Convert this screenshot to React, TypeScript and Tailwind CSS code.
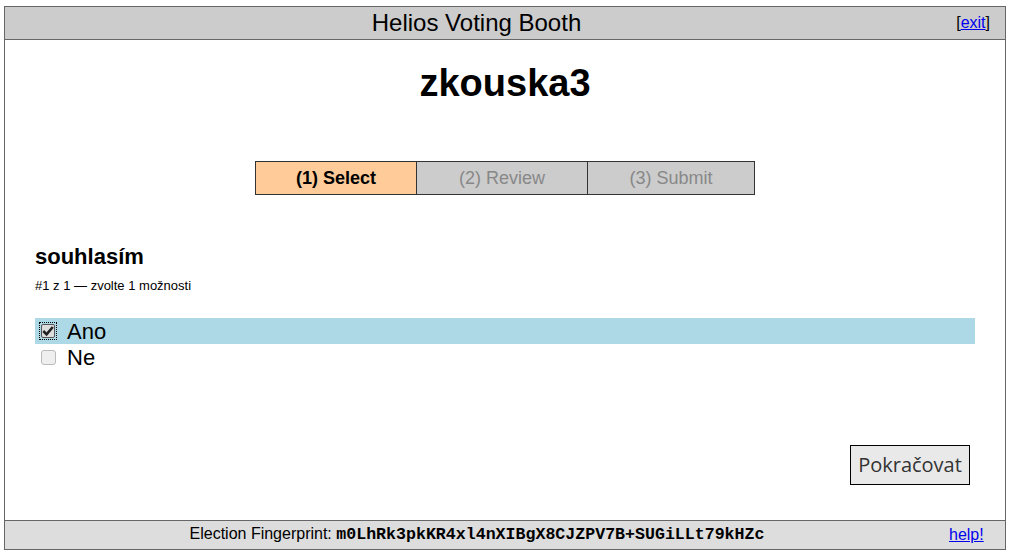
import { useState } from 'react';

const fingerprint = 'm0LhRk3pkKR4xl4nXIBgX8CJZPV7B+SUGiLLt79kHZc';

function Box({ checked }: { checked: boolean }) {
  if (checked) {
    return (
      <span className="flex h-[16px] w-[16px] items-center justify-center outline-1 outline-dotted outline-black">
        <span className="flex h-[14px] w-[14px] items-center justify-center rounded-[2px] border border-[#555] bg-[#ddd]">
          <svg viewBox="0 0 12 12" className="h-[12px] w-[12px]">
            <path d="M1.3 6 L4.6 9.3 L10.8 2" fill="none" stroke="#222" strokeWidth="2.6" />
          </svg>
        </span>
      </span>
    );
  }
  return (
    <span className="flex h-[16px] w-[16px] items-center justify-center">
      <span className="block h-[15px] w-[15px] rounded-[3px] border border-[#bbb] bg-[#efefef]" />
    </span>
  );
}

export default function App() {
  const [picked, setPicked] = useState('Ano');
  const answers = ['Ano', 'Ne'];

  return (
    <div className="min-h-[558px] bg-white pl-[4px] pr-[7px] pt-[6px] font-['Liberation_Sans',Arial,sans-serif] text-black">
      <div className="flex h-[544px] w-[1002px] flex-col border border-[#666]">
        {/* header */}
        <div className="flex h-[33px] items-center border-b border-[#666] bg-[#ccc]">
          <div className="flex-1 text-center text-[24px] leading-none">Helios Voting Booth</div>
          <div className="w-[57px] pr-[15px] text-right text-[16px]">
            [<a href="#" className="text-[#00e] underline">exit</a>]
          </div>
        </div>

        {/* main */}
        <div className="flex flex-1 flex-col px-[30px]">
          <h1 className="mt-[21px] text-center text-[38px] font-bold leading-[44px]">zkouska3</h1>

          <div className="mt-[56px] flex justify-center">
            <div className="flex h-[34px] w-[500px] border border-[#333] text-[18px]">
              <div className="flex w-[160px] items-center justify-center bg-[#fc9] font-bold">(1) Select</div>
              <div className="flex w-[171px] items-center justify-center border-l border-[#333] bg-[#ccc] text-[#888]">
                (2) Review
              </div>
              <div className="flex flex-1 items-center justify-center border-l border-[#333] bg-[#ccc] text-[#888]">
                (3) Submit
              </div>
            </div>
          </div>

          <h3 className="mt-[49px] text-[22px] font-bold leading-[26px]">souhlasím</h3>
          <p className="mt-[8px] text-[13px] leading-[15px]">#1 z 1 — zvolte 1 možnosti</p>

          <div className="mt-[25px] flex flex-col">
            {answers.map((a) => (
              <div
                key={a}
                onClick={() => setPicked(a)}
                className={`flex h-[26px] cursor-pointer items-center gap-[11px] pl-[5px] text-[22px] ${
                  picked === a ? 'bg-[#add8e6]' : ''
                }`}
              >
                <Box checked={picked === a} />
                <span>{a}</span>
              </div>
            ))}
          </div>

          <div className="mt-auto mb-[35px] flex justify-end pr-[5px]">
            <button className="h-[40px] w-[120px] border border-black bg-[#e9e9e9] font-['Open_Sans',sans-serif] text-[20px] text-[#333]">
              Pokračovat
            </button>
          </div>
        </div>

        {/* footer */}
        <div className="flex h-[29px] items-center border-t border-[#666] bg-[#ddd]">
          <div className="flex-1 text-center text-[16px]">
            Election Fingerprint:{' '}
            <span className="font-['Liberation_Mono',monospace] text-[16.6px] font-bold">{fingerprint}</span>
          </div>
          <div className="w-[56px] text-[16px]">
            <a href="#" className="text-[#00e] underline">help!</a>
          </div>
        </div>
      </div>
    </div>
  );
}
